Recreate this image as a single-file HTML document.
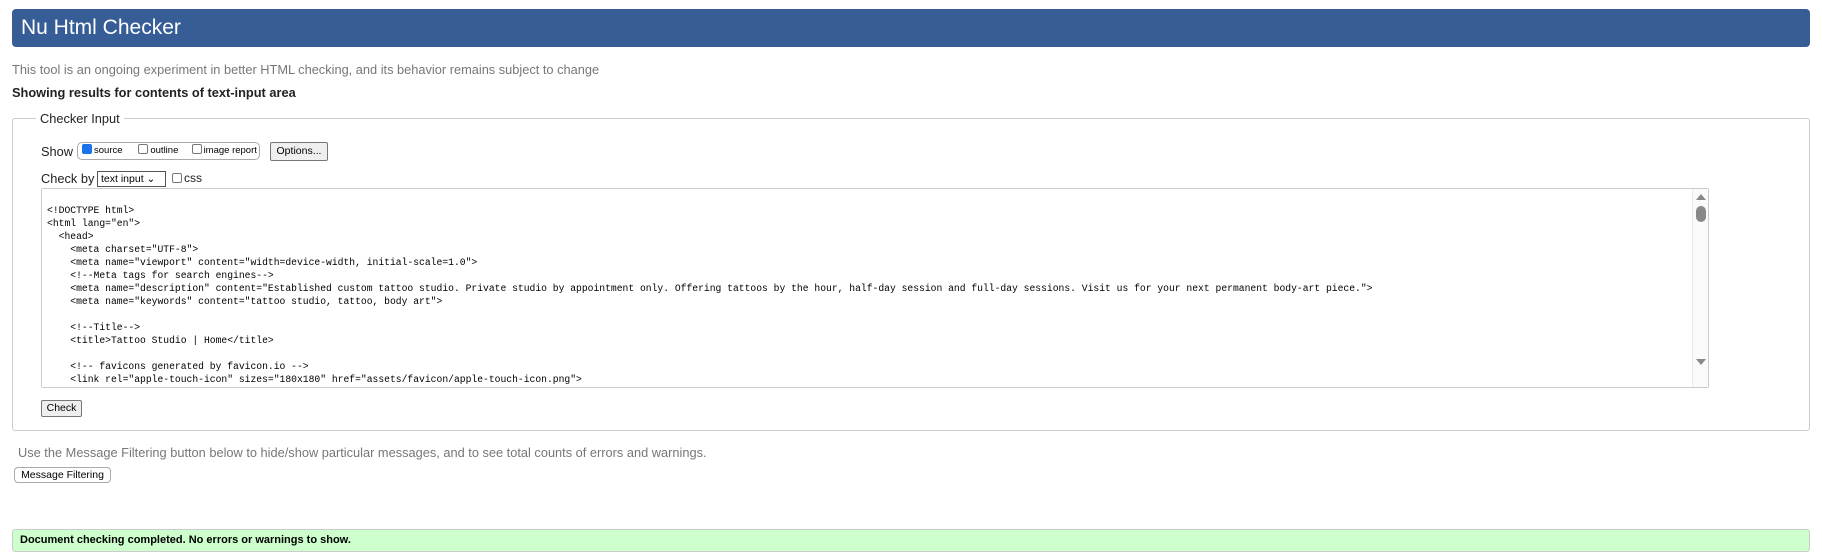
<!DOCTYPE html>
<html><head><meta charset="utf-8"><style>
*{box-sizing:border-box}
body{margin:0;width:1822px;height:558px;background:#fff;font-family:"Liberation Sans",Arial,sans-serif;position:relative;overflow:hidden}
.a{position:absolute}
#hd{left:12px;top:9px;width:1798px;height:38px;background:#365d95;border-radius:4px;color:#fff;font-size:21px;line-height:38px;padding-left:9px}
#intro{left:12px;top:62px;font-size:12.8px;color:#777}
#show{left:12px;top:85px;font-size:12.8px;font-weight:bold;color:#222}
#fs{left:12px;top:118px;width:1798px;height:313px;border:1px solid #ccc;border-radius:3px}
#lg{left:36px;top:111px;background:#fff;padding:0 4px;font-size:12.8px;color:#222}
.lbl{font-size:12.8px;color:#222}
.btn{border:1px solid #777;background:#efefef;font-size:10.5px;color:#000;text-align:center;border-radius:2px}
.cb{display:inline-block;width:10px;height:10px;border:1px solid #777;border-radius:2px;vertical-align:-1px;margin-right:2px;background:#fff}
#ta{left:41px;top:188px;width:1668px;height:200px;border:1px solid #ccc;border-radius:2px;overflow:hidden}
#code{left:5px;top:15px;font-family:"Liberation Mono",monospace;font-size:9.7px;line-height:13px;white-space:pre;color:#000}
#sb{right:0;top:0;width:16px;height:198px;background:#fafafa;border-left:1px solid #eee}
#green{left:12px;top:529px;width:1798px;height:23px;background:#ccffcc;border:1px solid #ccc;border-radius:3px;font-size:11px;font-weight:bold;padding-left:7px;line-height:21px}
</style></head><body>
<div id="hd" class="a">Nu Html Checker</div>
<div id="intro" class="a">This tool is an ongoing experiment in better HTML checking, and its behavior remains subject to change</div>
<div id="show" class="a">Showing results for contents of text-input area</div>
<div id="fs" class="a"></div>
<div id="lg" class="a">Checker Input</div>
<div class="a lbl" style="left:41px;top:144px">Show</div>
<div class="a" style="left:77px;top:142px;width:183px;height:18px;border:1px solid #aaa;border-radius:5px;font-size:9.5px;line-height:16px;padding-left:4px;white-space:nowrap"><span class="cb" style="background:#1a73e8;border-color:#1a73e8"></span>source &nbsp;&nbsp;&nbsp;&nbsp;&nbsp;<span class="cb"></span>outline &nbsp;&nbsp;&nbsp;&nbsp;<span class="cb"></span>image report</div>
<div class="a btn" style="left:270px;top:142px;width:58px;height:19px;line-height:17px">Options...</div>
<div class="a lbl" style="left:41px;top:171px">Check by</div>
<div class="a" style="left:97px;top:171px;width:69px;height:16px;border:1px solid #555;font-size:10.5px;line-height:14px;padding-left:3px">text input ⌄</div>
<div class="a lbl" style="left:172px;top:171px;font-size:12px"><span class="cb"></span>css</div>
<div id="ta" class="a">
<div id="code" class="a">&lt;!DOCTYPE html&gt;
&lt;html lang="en"&gt;
  &lt;head&gt;
    &lt;meta charset="UTF-8"&gt;
    &lt;meta name="viewport" content="width=device-width, initial-scale=1.0"&gt;
    &lt;!--Meta tags for search engines--&gt;
    &lt;meta name="description" content="Established custom tattoo studio. Private studio by appointment only. Offering tattoos by the hour, half-day session and full-day sessions. Visit us for your next permanent body-art piece."&gt;
    &lt;meta name="keywords" content="tattoo studio, tattoo, body art"&gt;

    &lt;!--Title--&gt;
    &lt;title&gt;Tattoo Studio | Home&lt;/title&gt;

    &lt;!-- favicons generated by favicon.io --&gt;
    &lt;link rel="apple-touch-icon" sizes="180x180" href="assets/favicon/apple-touch-icon.png"&gt;</div>
<div id="sb" class="a">
<div class="a" style="left:3px;top:5px;width:0;height:0;border-left:5px solid transparent;border-right:5px solid transparent;border-bottom:6px solid #888"></div>
<div class="a" style="left:3px;top:17px;width:10px;height:16px;background:#888;border-radius:5px"></div>
<div class="a" style="left:3px;top:170px;width:0;height:0;border-left:5px solid transparent;border-right:5px solid transparent;border-top:6px solid #888"></div>
</div>
</div>
<div class="a btn" style="left:41px;top:400px;width:41px;height:17px;line-height:15px">Check</div>
<div class="a" style="left:18px;top:445px;font-size:12.8px;color:#777">Use the Message Filtering button below to hide/show particular messages, and to see total counts of errors and warnings.</div>
<div class="a btn" style="left:14px;top:467px;width:97px;height:16px;line-height:14px;border-color:#aaa;border-radius:4px;background:#fff">Message Filtering</div>
<div id="green" class="a">Document checking completed. No errors or warnings to show.</div>
</body></html>
